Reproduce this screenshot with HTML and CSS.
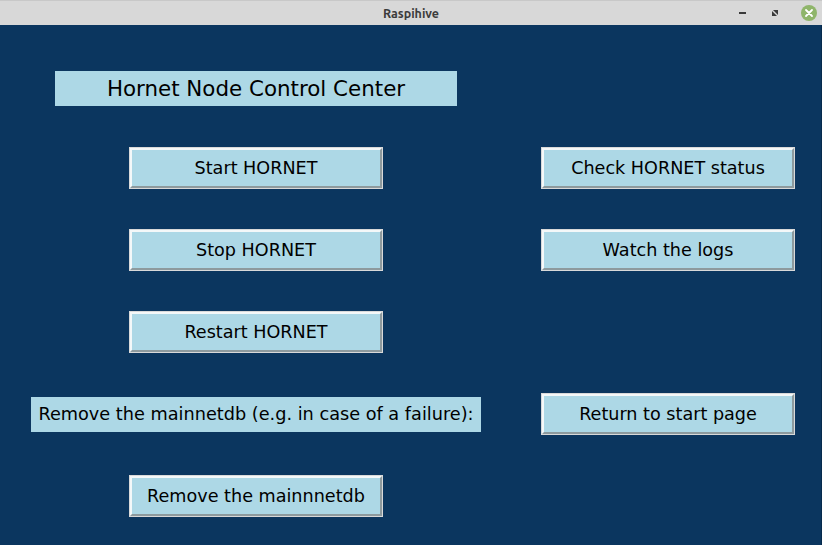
FILE: index.html
```html
<!DOCTYPE html>
<html>
<head>
<meta charset="utf-8">
<link rel="stylesheet" href="styles.css">
</head>
<body>
<div class="window">
  <div class="titlebar">
    <span class="title">Raspihive</span>
    <div class="controls">
      <svg class="ctl" width="14" height="14" viewBox="0 0 14 14"><rect x="3" y="6" width="7" height="2" fill="#3a3a3a"/></svg>
      <svg class="ctl" width="14" height="14" viewBox="0 0 14 14"><path d="M5 4 H10 V9 Z" fill="#3a3a3a"/><path d="M4 5 V10 H9 Z" fill="#3a3a3a"/></svg>
      <svg class="ctl close" width="18" height="18" viewBox="0 0 18 18"><circle cx="9" cy="9" r="8" fill="#8fb56a"/><path d="M6 6 L12 12 M12 6 L6 12" stroke="#fff" stroke-width="1.8" stroke-linecap="round"/></svg>
    </div>
  </div>
  <div class="content">
    <div class="label title-label">Hornet Node Control Center</div>
    <div class="spacer"></div>
    <div class="btn">Start HORNET</div>
    <div class="btn c2">Check HORNET status</div>
    <div class="btn">Stop HORNET</div>
    <div class="btn c2">Watch the logs</div>
    <div class="btn">Restart HORNET</div>
    <div class="spacer"></div>
    <div class="label remove-label">Remove the mainnetdb (e.g. in case of a failure):</div>
    <div class="btn c2">Return to start page</div>
    <div class="btn">Remove the mainnnetdb</div>
    <div class="spacer"></div>
  </div>
</div>
</body>
</html>
```

FILE: styles.css
```css
html, body {
  margin: 0;
  padding: 0;
}
body {
  width: 822px;
  height: 545px;
  overflow: hidden;
  font-family: "DejaVu Sans", sans-serif;
}
.window {
  width: 822px;
  height: 545px;
  display: flex;
  flex-direction: column;
}
.titlebar {
  height: 25px;
  background: #d8d8d8;
  display: flex;
  align-items: center;
  justify-content: center;
  position: relative;
  border-top: 1px solid #c8c8c8;
  box-sizing: border-box;
}
.title {
  font-family: "Ubuntu", "DejaVu Sans", sans-serif;
  font-size: 12.5px;
  font-weight: bold;
  color: #3c3c3c;
}
.controls {
  position: absolute;
  right: 4px;
  top: 3px;
  display: flex;
  align-items: center;
  gap: 18px;
}
.ctl {
  display: block;
}
.content {
  flex: 1;
  background: #0b365f;
  display: grid;
  grid-template-columns: 512px 310px;
  grid-template-rows: 102px 82px 82px 82px 82px 82px;
  justify-items: center;
  align-items: center;
  border-right: 1px solid #062a4c;
}
.label {
  background: #add8e6;
  color: #000;
  display: flex;
  align-items: center;
  justify-content: center;
  height: 35px;
}
.title-label {
  width: 402px;
  font-size: 21.4px;
  align-self: end;
  margin-bottom: 21px;
}
.remove-label {
  width: 450px;
  font-size: 17.7px;
}
.btn {
  box-sizing: border-box;
  width: 252px;
  height: 40px;
  background: #add8e6;
  color: #000;
  font-size: 17.6px;
  display: flex;
  align-items: center;
  justify-content: center;
  border-top: 2px solid #f4f8f9;
  border-left: 2px solid #f4f8f9;
  border-right: 2px solid #8d9a9e;
  border-bottom: 2px solid #8d9a9e;
  outline: 1px solid #d9d9d9;
}
.c2 {
  margin-left: 2px;
}
```
